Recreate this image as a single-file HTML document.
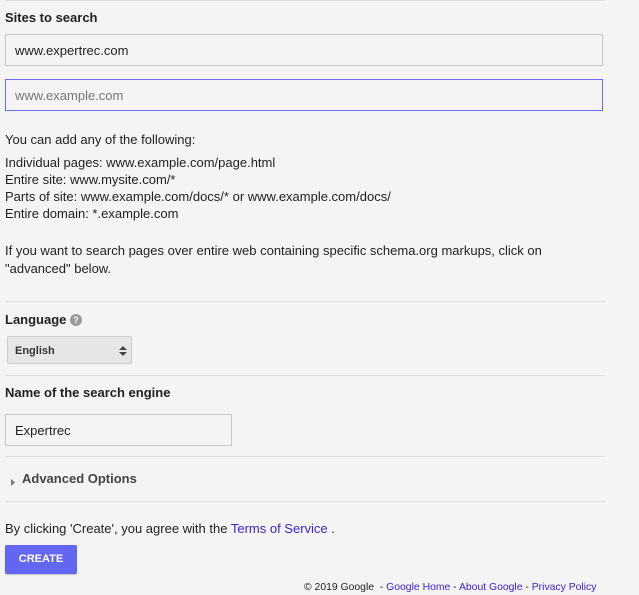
<!DOCTYPE html>
<html><head><style>
body{margin:0;width:639px;height:595px;background:#f4f4f4;font-family:"Liberation Sans",Arial,sans-serif;color:#222;position:relative;overflow:hidden}
.a{position:absolute}
.hr{position:absolute;left:5px;width:600px;height:1px;background:#ddd}
.lbl{font-weight:bold;font-size:13px;color:#222}
.inp{position:absolute;box-sizing:border-box;border:1px solid #c8c8c8;background:#f4f4f4;font-size:13px;padding-left:9px;display:flex;align-items:center}
.t{font-size:13px;line-height:17px}
a{color:#3d1fce;text-decoration:none}
</style></head><body>
<div class="hr" style="top:0"></div>
<div class="a lbl" style="left:5px;top:10px">Sites to search</div>
<div class="inp" style="left:5px;top:34px;width:598px;height:32px;color:#222">www.expertrec.com</div>
<div class="inp" style="left:5px;top:79px;width:598px;height:32px;border-color:#6b6cf0;color:#777">www.example.com</div>
<div class="a t" style="left:5px;top:131px">You can add any of the following:</div>
<div class="a t" style="left:5px;top:154px">Individual pages: www.example.com/page.html<br>Entire site: www.mysite.com/*<br>Parts of site: www.example.com/docs/* or www.example.com/docs/<br>Entire domain: *.example.com</div>
<div class="a t" style="left:5px;top:242px;line-height:18px">If you want to search pages over entire web containing specific schema.org markups, click on<br>"advanced" below.</div>
<div class="hr" style="top:301px"></div>
<div class="a lbl" style="left:5px;top:312px">Language <span style="display:inline-block;width:12px;height:12px;border-radius:6px;background:#999;color:#fff;font-size:9px;text-align:center;line-height:12px;vertical-align:1px">?</span></div>
<div class="a" style="left:7px;top:336px;width:125px;height:28px;box-sizing:border-box;border:1px solid #ccc;border-radius:2px;background:#e6e6e6;font-size:11px;font-weight:bold;color:#333;padding:8px 0 0 7px">English
<svg class="a" style="left:111px;top:8px" width="8" height="12"><path d="M0 5 L4 1 L8 5Z M0 7 L4 11 L8 7Z" fill="#444"/></svg></div>
<div class="hr" style="top:375px"></div>
<div class="a lbl" style="left:5px;top:385px">Name of the search engine</div>
<div class="inp" style="left:5px;top:414px;width:227px;height:32px">Expertrec</div>
<div class="hr" style="top:456px"></div>
<svg class="a" style="left:11px;top:479px" width="5" height="7"><path d="M0 0 L4 3.5 L0 7Z" fill="#777"/></svg>
<div class="a lbl" style="left:22px;top:471px;color:#444">Advanced Options</div>
<div class="hr" style="top:501px"></div>
<div class="a t" style="left:5px;top:520px">By clicking 'Create', you agree with the <a>Terms of Service</a> .</div>
<div class="a" style="left:5px;top:545px;width:72px;height:29px;background:#6366f1;border-radius:2px;color:#fff;font-size:11px;font-weight:bold;text-align:center;line-height:29px;box-shadow:0 1px 1px rgba(0,0,0,.2)">CREATE</div>
<div class="a" style="left:304px;top:582px;font-size:10.4px;white-space:nowrap;color:#222">© 2019 Google &nbsp;- <a>Google Home</a> - <a>About Google</a> - <a>Privacy Policy</a></div>
</body></html>
